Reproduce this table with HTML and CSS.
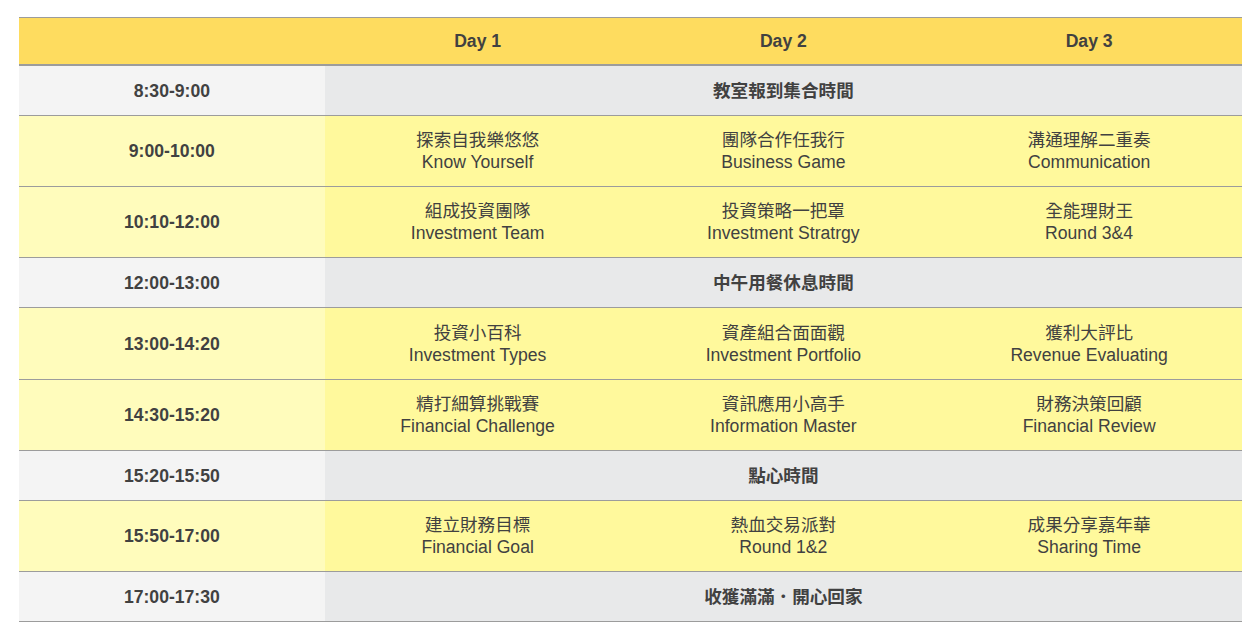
FILE: index.html
```html
<!DOCTYPE html>
<html lang="zh-Hant">
<head>
<meta charset="utf-8">
<title>課程表</title>
<link rel="stylesheet" href="styles.css">
</head>
<body>
<div class="wrap">
<table class="schedule">
  <colgroup><col class="c"><col class="c"><col class="c"><col class="c"></colgroup>
  <thead>
    <tr class="head"><th></th><th>Day 1</th><th>Day 2</th><th>Day 3</th></tr>
  </thead>
  <tbody>
    <tr class="gray"><td class="time">8:30-9:00</td><td colspan="3" class="merged">教室報到集合時間</td></tr>
    <tr class="yellow"><td class="time">9:00-10:00</td><td>探索自我樂悠悠<br>Know Yourself</td><td>團隊合作任我行<br>Business Game</td><td>溝通理解二重奏<br>Communication</td></tr>
    <tr class="yellow"><td class="time">10:10-12:00</td><td>組成投資團隊<br>Investment Team</td><td>投資策略一把罩<br>Investment Stratrgy</td><td>全能理財王<br>Round 3&amp;4</td></tr>
    <tr class="gray thick"><td class="time">12:00-13:00</td><td colspan="3" class="merged">中午用餐休息時間</td></tr>
    <tr class="yellow tall"><td class="time">13:00-14:20</td><td>投資小百科<br>Investment Types</td><td>資產組合面面觀<br>Investment Portfolio</td><td>獲利大評比<br>Revenue Evaluating</td></tr>
    <tr class="yellow"><td class="time">14:30-15:20</td><td>精打細算挑戰賽<br>Financial Challenge</td><td>資訊應用小高手<br>Information Master</td><td>財務決策回顧<br>Financial Review</td></tr>
    <tr class="gray"><td class="time">15:20-15:50</td><td colspan="3" class="merged">點心時間</td></tr>
    <tr class="yellow thick"><td class="time">15:50-17:00</td><td>建立財務目標<br>Financial Goal</td><td>熱血交易派對<br>Round 1&amp;2</td><td>成果分享嘉年華<br>Sharing Time</td></tr>
    <tr class="gray"><td class="time">17:00-17:30</td><td colspan="3" class="merged">收獲滿滿．開心回家</td></tr>
  </tbody>
</table>
</div>
</body>
</html>
```
FILE: styles.css
```css
html, body {
  margin: 0;
  padding: 0;
  background: #ffffff;
}
.wrap {
  padding: 17px 18px 0 19px;
}
.schedule {
  width: 1223px;
  border-collapse: collapse;
  table-layout: fixed;
  font-family: "Liberation Sans", "Noto Sans CJK TC", Arial, sans-serif;
  font-size: 17.6px;
  color: #414141;
  text-align: center;
}
.schedule .c {
  width: 25%;
}
.schedule th,
.schedule td {
  padding: 0;
  vertical-align: middle;
  text-align: center;
}
.head th {
  background: #fedc5f;
  height: 46px;
  font-weight: bold;
  border-top: 1px solid #9c9c9c;
  border-bottom: 2px solid #9c9c9c;
  line-height: 20px;
}
.schedule tbody td {
  border-bottom: 1px solid #9c9c9c;
}
.time {
  font-weight: bold;
  line-height: 20px;
}
.gray td {
  height: 49px;
}
.gray .time {
  background: #f4f4f4;
}
.gray .merged {
  background: #e8e9ea;
  font-weight: bold;
  line-height: 20px;
}
.yellow td {
  height: 70px;
  background: #fff99c;
  line-height: 22px;
}
.yellow.tall td {
  height: 71px;
}
.yellow td.time {
  background: #fffcbc;
  line-height: 20px;
}
.thick td {
  border-bottom-width: 2px;
}
```
